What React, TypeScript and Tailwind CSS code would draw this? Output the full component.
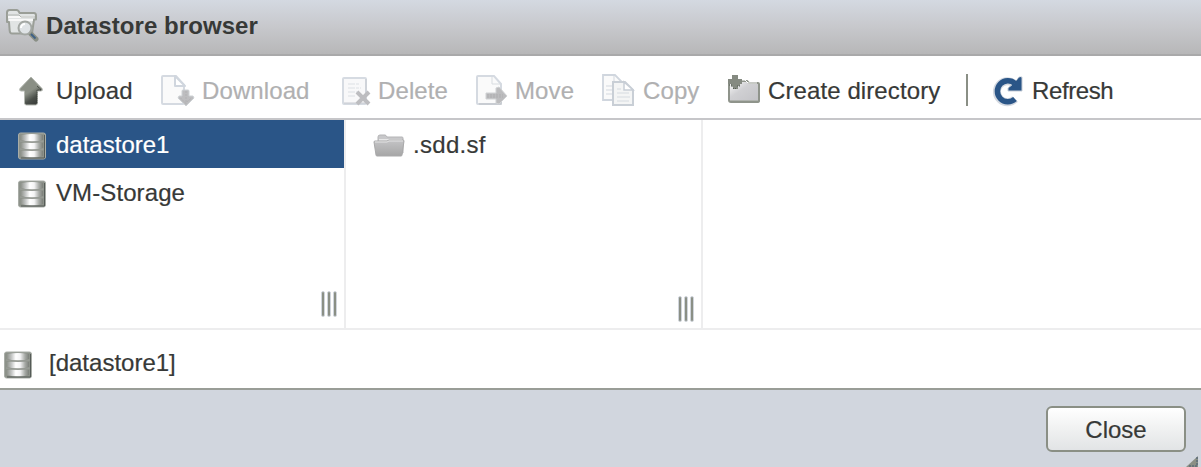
import type { ReactNode } from "react";

const INK = "text-[#373937]";

function Icon({ children, size = 34 }: { children: ReactNode; size?: number }) {
  return (
    <svg width={size} height="34" viewBox={`0 0 ${size} 34`} fill="none" className="shrink-0">
      {children}
    </svg>
  );
}

function Gradients() {
  return (
    <svg width="0" height="0" className="absolute">
      <defs>
        <linearGradient id="disk" x1="0" x2="1">
          <stop offset="0" stopColor="#8f938c" />
          <stop offset=".2" stopColor="#c2c4c3" />
          <stop offset=".4" stopColor="#ffffff" />
          <stop offset=".6" stopColor="#f4f4f5" />
          <stop offset=".82" stopColor="#a6a9a5" />
          <stop offset="1" stopColor="#7b7f79" />
        </linearGradient>
        <linearGradient id="folder" x1="0" y1="0" x2="0" y2="1">
          <stop offset="0" stopColor="#c4c4c6" />
          <stop offset="1" stopColor="#a6a6a6" />
        </linearGradient>
        <linearGradient id="arrow" x1="0.2" y1="0" x2=".75" y2="1">
          <stop offset=".5" stopColor="#8a8f85" />
          <stop offset=".75" stopColor="#4b504a" />
          <stop offset="1" stopColor="#373937" />
        </linearGradient>
        <linearGradient id="newFolder" x1="0" y1="0" x2="1" y2="1">
          <stop offset=".1" stopColor="#f2f2f3" />
          <stop offset=".42" stopColor="#d0d0d3" />
          <stop offset="1" stopColor="#c2c2c6" />
        </linearGradient>
      </defs>
    </svg>
  );
}

function BrowserIcon() {
  return (
    <Icon>
      <path d="M2 4.5Q2 2 4.5 2h7q2 0 3 3h14.5q2 0 2 2.500v4h-2l-2 14H7q-2 0-2.300-2.500L4 14H2z" fill="#e1e4e4" stroke="#9a9e97" strokeWidth="2" strokeLinejoin="round" />
      <path d="M3 9h26M4 12h24" stroke="#f8f8f8" strokeWidth="2" />
      <path d="M2.500 7H14l2 2h14" stroke="#b0b4b0" />
      <path d="m26 26 5 5" stroke="#8a8f85" strokeWidth="5" strokeLinecap="round" />
      <path d="m26 26 4.500 4.500" stroke="#3f6186" strokeWidth="2" />
      <circle cx="20" cy="20" r="6.500" fill="#dfe3e6" stroke="#a3a7a3" strokeWidth="2" />
      <path d="M16 20a4 4 0 0 1 4-4" stroke="white" strokeWidth="2" />
    </Icon>
  );
}

function UploadIcon() {
  return (
    <Icon>
      <path d="M16 3 27 14.500q1 2.500-1 2.500h-3.500V29q0 2-2 2h-9q-2 0-2-2V17H6q-2 0-1-2.500z" fill="url(#arrow)" stroke="#b4b8b1" />
      <path d="m22 12 4 4h-4V29" stroke="#383c38" strokeDasharray="1 1" />
    </Icon>
  );
}

function DownloadIcon() {
  return (
    <Icon>
      <path d="M2 2h13l8 9v18q0 1-1 1H2q-1 0-1-1V3q0-1 1-1z" fill="#fafafa" stroke="#d5dae1" strokeWidth="2" />
      <path d="M14 2v10h10z" fill="#fff" stroke="#d0d6de" strokeWidth="2" strokeLinejoin="round" />
      <path d="M22 16h5q1 0 1 1v5h4l1 2-8 8-8-8 1-2h3v-5q0-1 1-1z" fill="#bdbdbf" stroke="#ced2d5" strokeLinejoin="round" />
      <path d="M25 17v13M19.500 24l5 5 6-5" stroke="#b1b1b3" strokeDasharray="2 1" />
    </Icon>
  );
}

function DeleteIcon() {
  return (
    <Icon>
      <rect x="6" y="4" width="23" height="26" rx="1" fill="#f8f8f9" stroke="#d6dbe2" strokeWidth="2" />
      <path d="M11 10h12M11 14h13M11 18h12M11 22h7" stroke="#dce0e4" strokeDasharray="7 1 3 1" />
      <path d="M7 29h23M29 5v17" stroke="#c8cbd0" />
      <path d="m20 18 12 12m0-12L20 30" stroke="#bdbdc0" strokeWidth="4" />
    </Icon>
  );
}

function MoveIcon() {
  return (
    <Icon>
      <path d="M4 2h16l7 8v19q0 1-1 1H4q-1 0-1-1V3q0-1 1-1z" fill="#fafafa" stroke="#d5dae1" strokeWidth="2" />
      <path d="M18 3v7h8" stroke="#d8dce0" />
      <path d="M5 30h22V20" stroke="#c4c8cd" strokeWidth="1.500" />
      <path d="M12 19h10v-5l3-1 8 9-8 8-3-1v-4H12z" fill="#bcbcbe" stroke="#d0d2d4" strokeLinejoin="round" />
      <path d="M13 21h16M13 23h16" stroke="#adadaf" strokeDasharray="2 1" />
    </Icon>
  );
}

function CopyIcon() {
  return (
    <Icon>
      <path d="M1 1h12l7 7v18H1z" fill="#fafafa" stroke="#d0d6de" strokeWidth="1.800" />
      <path d="M12 2v6h7M4 12h8M4 16h8M4 20h8" stroke="#d3d8df" />
      <path d="M11 8h12l8 8v15H11z" fill="#f4f5f5" stroke="#c9cfd6" strokeWidth="2" />
      <path d="M22 8v8h9z" fill="#fff" stroke="#c8ced6" strokeWidth="1.500" />
      <path d="M15 15h4M15 19h12M15 23h13M15 27h12" stroke="#d6dbe0" />
    </Icon>
  );
}

function CreateDirectoryIcon() {
  return (
    <Icon>
      <path d="M2 7h18l2 2h9q1 0 1 1v17q0 1-2 1H4q-2 0-2-2z" fill="url(#newFolder)" stroke="#8f948b" strokeWidth="2" />
      <path d="M14 6h4l3 3h9" stroke="#fff" />
      <path d="M3 26.500h28" stroke="#b0b3ae" />
      <path d="M5 1h6v4h4v5h-2v2h-2v3H6v-3H4v-2H1V5h4z" fill="#858a81" />
      <path d="M2 11h3v3m5-2h3M6 14.500h4" stroke="#555c54" strokeDasharray="1 1" />
    </Icon>
  );
}

function RefreshIcon() {
  return (
    <Icon>
      <path d="M24 25A10.500 10.500 0 1 1 23 9.500" stroke="#d3d8e0" strokeWidth="8" />
      <path d="M24.500 8 28 3h3v14H17v-3z" fill="#2a5587" stroke="#c7ced7" />
      <path d="M24 25A10.500 10.500 0 1 1 24 9.500" stroke="#2a5587" strokeWidth="5.500" />
      <path d="m24 8 4-4 2-1v13H18v-2l6-1z" fill="#2a5587" />
    </Icon>
  );
}

function DatastoreIcon() {
  return (
    <svg width="30" height="30" viewBox="0 0 30 30" fill="none" className="shrink-0">
      <rect x="1.500" y="2" width="27" height="26" rx="2" fill="#8d928a" stroke="#a9ada7" />
      {[3, 11, 19].map((y) => (
        <path key={y} d={`M4 ${y + 1}q11-2 22 0v5q-11 3-22 0z`} fill="url(#disk)" />
      ))}
      <path d="M3 10q12 2.500 24 0M3 18q12 2.500 24 0" stroke="#979b95" strokeWidth="1.500" />
      <path d="M27.500 4v23H4" stroke="#555b57" />
    </svg>
  );
}

function FolderIcon() {
  return (
    <Icon>
      <path d="M5 6q0-2 2-2h5q1 0 2 2h15q1 0 1 1v15H5z" fill="#c8c8ca" stroke="#b4b4b6" />
      <path d="M6 9h23" stroke="#e8e8e8" strokeWidth="2" />
      <path d="M1 11q0-1 1-1h12l2-1h14q1 0 1 1l-2 14q0 1-1 1H4q-1 0-1-1z" fill="url(#folder)" stroke="#a9a9aa" />
      <path d="M2 11h12l2-1h14" stroke="#e4e4e5" />
    </Icon>
  );
}

type ToolProps = { icon: ReactNode; label: string; width: string; disabled?: boolean; tracking?: string };

function ToolButton({ icon, label, width, disabled, tracking = "tracking-[0.1px]" }: ToolProps) {
  return (
    <button
      disabled={disabled}
      className={`flex h-full shrink-0 items-center gap-[7px] ${width} ${disabled ? "text-[#b0b0b1]" : INK}`}
    >
      {icon}
      <span className={tracking}>{label}</span>
    </button>
  );
}

function Grip({ className }: { className: string }) {
  return (
    <div className={`flex gap-0.5 ${className}`}>
      {[0, 1, 2].map((bar) => (
        <span key={bar} className="h-[26px] w-1 rounded-sm border border-[#d0d5dc] bg-[#8a8f85]" />
      ))}
    </div>
  );
}

export default function App() {
  return (
    <main className={`flex h-[467px] w-[1201px] flex-col overflow-hidden bg-white font-['Liberation_Sans',Arial,sans-serif] text-2xl leading-7 whitespace-nowrap [-webkit-text-stroke:0.2px] ${INK}`}>
      <Gradients />
      <header className="flex h-14 shrink-0 items-center gap-[7px] border-b-2 border-[#a9a9aa] bg-linear-to-b from-[#d4d9e1] via-[#c7c8cc] to-[#b7b7b8] pb-1 pl-[5px]">
        <BrowserIcon />
        <h1 className="mt-0.5 font-bold tracking-[0.07px] [-webkit-text-stroke:0px]">Datastore browser</h1>
      </header>

      <nav className="flex h-16 shrink-0 items-center border-b-2 border-[#c6c6c9] pt-[7px] pl-[15px]">
        <ToolButton icon={<UploadIcon />} label="Upload" width="w-[146px]" />
        <ToolButton icon={<DownloadIcon />} label="Download" width="w-44" disabled />
        <ToolButton icon={<DeleteIcon />} label="Delete" width="w-[137px]" disabled />
        <ToolButton icon={<MoveIcon />} label="Move" width="w-32" disabled />
        <ToolButton icon={<CopyIcon />} label="Copy" width="w-[125px]" disabled />
        <ToolButton icon={<CreateDirectoryIcon />} label="Create directory" width="w-[239px]" />
        <div className="mb-px h-8 w-0.5 bg-[#8a8f85]" />
        <div className="w-[23px]" />
        <ToolButton icon={<RefreshIcon />} label="Refresh" width="w-[140px]" tracking="tracking-[-0.4px]" />
      </nav>

      <section className="flex h-[210px] shrink-0 border-b-2 border-[#ededee]">
        <div className="flex w-[346px] flex-col border-r-2 border-[#ededee]">
          <div className="flex h-12 items-center gap-[9px] bg-[#2a5587] pl-[17px] text-white">
            <span className="mt-1"><DatastoreIcon /></span>
            <span className="mt-0.5">datastore1</span>
          </div>
          <div className="flex h-12 items-center gap-[9px] pl-[17px]">
            <span className="mt-1"><DatastoreIcon /></span>
            <span className="mt-0.5 tracking-[0.1px]">VM-Storage</span>
          </div>
          <Grip className="mt-auto mr-[7px] mb-[11px] self-end" />
        </div>
        <div className="flex w-[357px] flex-col border-r-2 border-[#ededee]">
          <div className="flex h-12 items-center gap-1.5 pl-[27px]">
            <span className="mt-2"><FolderIcon /></span>
            <span className="mt-0.5 tracking-[0.3px]">.sdd.sf</span>
          </div>
          <Grip className="mt-auto mr-[7px] mb-1.5 self-end" />
        </div>
        <div className="flex-1" />
      </section>

      <section className="flex h-[58px] shrink-0 items-center gap-4 pl-[3px]">
        <span className="mt-[11px]"><DatastoreIcon /></span>
        <span className="mt-2">[datastore1]</span>
      </section>

      <footer className="relative flex flex-1 items-start justify-end border-t-2 border-[#999d97] bg-[#d1d6de] pt-4 pr-[15px]">
        <button className="h-[46px] w-[140px] rounded-md border-2 border-[#8a8f85] bg-linear-to-b from-white via-[#f0f1f1] to-[#e2e4e6] pt-0.5">
          Close
        </button>
        <svg width="12" height="12" viewBox="0 0 12 12" className="absolute right-[3px] bottom-0">
          <path d="M12 1v11H0z" fill="#8a8f85" />
          <path d="M11 2v9H2" stroke="#445b72" strokeDasharray="2 1" fill="none" />
        </svg>
      </footer>
    </main>
  );
}
